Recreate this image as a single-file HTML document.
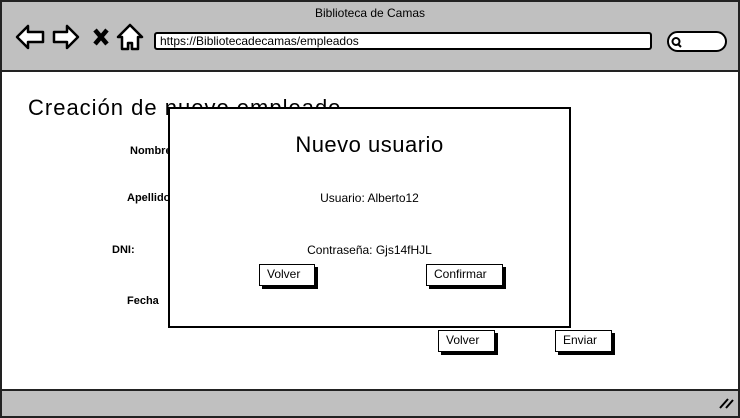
<!DOCTYPE html>
<html><head><meta charset="utf-8"><style>
*{margin:0;padding:0;box-sizing:border-box}
body{width:740px;height:418px;background:#fff;position:relative;overflow:hidden;font-family:"Liberation Sans",sans-serif;color:#000}
.a{position:absolute;white-space:nowrap}
.btn{position:absolute;background:#fff;border:1.5px solid #000;box-shadow:3px 3px 0 #000;font-size:12px;line-height:19px;padding-left:7px}
.lbl{font-size:11px;font-weight:bold}
</style></head><body>
<div class="a" style="left:0;top:0;width:740px;height:418px;border:2px solid #222"></div>
<div class="a" style="left:2px;top:2px;width:736px;height:70px;background:#c0c0c0;border-bottom:2px solid #222"></div>
<div class="a" style="left:2px;top:389px;width:736px;height:27px;background:#c0c0c0;border-top:2px solid #222"></div>
<div class="a" style="left:0;top:6px;width:740px;text-align:center;font-size:12px">Biblioteca de Camas</div>
<svg class="a" style="left:14px;top:23px" width="135" height="28" viewBox="0 0 135 28">
<g fill="#fff" stroke="#000" stroke-width="2.5" stroke-linejoin="round">
<path d="M3 14 L14 3 L14 9 L29 9 L29 19 L14 19 L14 25 Z"/>
<path d="M64 14 L53 3 L53 9 L40 9 L40 19 L53 19 L53 25 Z"/>
<path d="M104 14 L116 2 L128 14 L124 14 L124 26 L118 26 L118 20 L114 20 L114 26 L108 26 L108 14 Z"/>
</g>
<path d="M81 7 L93 21 M93 7 L81 21" stroke="#000" stroke-width="4.5"/>
</svg>
<div class="a" style="left:154px;top:32px;width:498px;height:18px;background:#fff;border:2px solid #000;border-radius:3px;font-size:12px;line-height:14px;padding-left:4px">https://Bibliotecadecamas/empleados</div>
<div class="a" style="left:667px;top:31px;width:60px;height:21px;background:#fff;border:2px solid #000;border-radius:11px"></div>
<svg class="a" style="left:670px;top:36px" width="14" height="12"><circle cx="6" cy="5.5" r="3.5" fill="none" stroke="#000" stroke-width="2"/><path d="M8 8 L11 11" stroke="#000" stroke-width="2"/></svg>
<div class="a" style="left:28px;top:95px;font-size:22px;letter-spacing:1px">Creación de nuevo empleado</div>
<div class="a lbl" style="left:130px;top:145px">Nombre:</div>
<div class="a lbl" style="left:127px;top:192px">Apellidos:</div>
<div class="a lbl" style="left:112px;top:244px">DNI:</div>
<div class="a lbl" style="left:127px;top:295px">Fecha</div>
<div class="a" style="left:168px;top:107px;width:403px;height:221px;background:#fff;border:2px solid #000"></div>
<div class="a" style="left:168px;top:132px;width:403px;text-align:center;font-size:22px;letter-spacing:0.5px">Nuevo usuario</div>
<div class="a" style="left:168px;top:191px;width:403px;text-align:center;font-size:12px">Usuario: Alberto12</div>
<div class="a" style="left:168px;top:243px;width:403px;text-align:center;font-size:12px">Contraseña: Gjs14fHJL</div>
<div class="btn" style="left:259px;top:264px;width:56px;height:22px">Volver</div>
<div class="btn" style="left:426px;top:264px;width:77px;height:22px">Confirmar</div>
<div class="btn" style="left:438px;top:330px;width:57px;height:22px">Volver</div>
<div class="btn" style="left:555px;top:330px;width:57px;height:22px">Enviar</div>
<svg class="a" style="left:718px;top:396px" width="16" height="14"><path d="M2 12 L10 3 M8 12 L15 4" stroke="#000" stroke-width="2"/></svg>
</body></html>
